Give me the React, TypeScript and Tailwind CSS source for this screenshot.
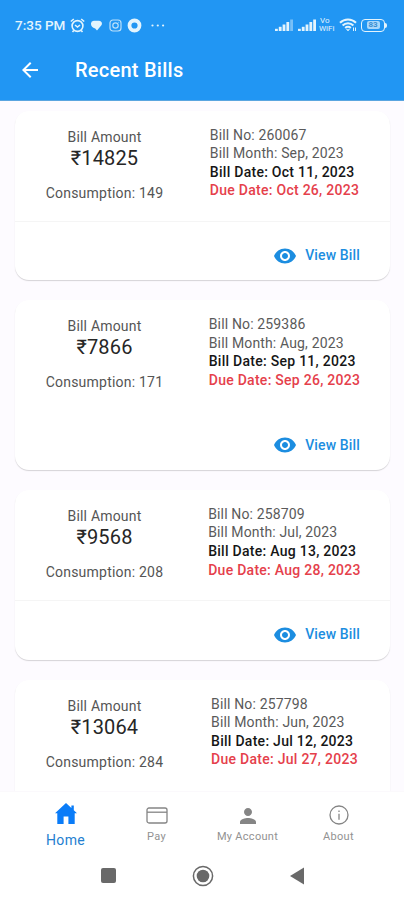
import type { ReactNode } from 'react';
import { MdArrowBack, MdPerson, MdVisibility } from 'react-icons/md';

type Bill = {
  no: string;
  amount: string;
  consumption: number;
  month: string;
  billDate: string;
  dueDate: string;
  divider: boolean;
  viewable: boolean;
};

const bills: Bill[] = [
  { no: '260067', amount: '14825', consumption: 149, month: 'Sep, 2023', billDate: 'Oct 11, 2023', dueDate: 'Oct 26, 2023', divider: true, viewable: true },
  { no: '259386', amount: '7866', consumption: 171, month: 'Aug, 2023', billDate: 'Sep 11, 2023', dueDate: 'Sep 26, 2023', divider: false, viewable: true },
  { no: '258709', amount: '9568', consumption: 208, month: 'Jul, 2023', billDate: 'Aug 13, 2023', dueDate: 'Aug 28, 2023', divider: true, viewable: true },
  { no: '257798', amount: '13064', consumption: 284, month: 'Jun, 2023', billDate: 'Jul 12, 2023', dueDate: 'Jul 27, 2023', divider: false, viewable: false },
];

function Signal({ weak = false }: { weak?: boolean }) {
  return (
    <svg width="18" height="12" viewBox="0 0 18 12" fill="currentColor">
      <rect x="0" y="9.8" width="2.8" height="2.2" />
      <rect x="3.8" y="7.8" width="2.8" height="4.2" />
      <rect x="7.6" y="5.5" width="2.8" height="6.5" />
      <rect x="11.4" y="3" width="2.8" height="9" />
      <rect x="15.2" y="0.5" width="2.8" height="11.5" opacity={weak ? 0.45 : 1} />
    </svg>
  );
}

function StatusBar() {
  return (
    <div className="flex h-[50px] items-center pl-[15px] pr-[17px] text-[#e3f4fd]">
      <span className="w-[54px] whitespace-nowrap text-[13.5px] font-medium">7:35 PM</span>
      {/* alarm */}
      <svg className="ml-[1px] shrink-0" width="15" height="15" viewBox="0 0 15 15" fill="none" stroke="currentColor" strokeWidth="1.6">
        <circle cx="7.5" cy="8" r="5.4" />
        <path d="M.8 3.5 3.8 1M14.2 3.5 11.2 1M3.8 12.5l-1.3 1.5M11.2 12.5l1.3 1.5M5 7l2.5 2L10 7" />
      </svg>
      {/* chat */}
      <svg className="ml-[6px] shrink-0" width="11" height="11" viewBox="0 0 11 11" fill="currentColor">
        <path d="M2.8.8h5.4a2.8 2.8 0 0 1 2.2 4.4L6 10.6 4.2 8.4C1.5 7.6 0 6.2 0 4A3 3 0 0 1 2.8.8Z" />
      </svg>
      {/* instagram */}
      <svg className="ml-[7px] shrink-0 opacity-80" width="13" height="13" viewBox="0 0 13 13" fill="none" stroke="currentColor" strokeWidth="1.2">
        <rect x="1" y="1" width="11" height="11" rx="3" />
        <circle cx="6.5" cy="6.5" r="2.7" />
        <path d="M9.5 3.4h.6" />
      </svg>
      <svg className="ml-[5px] shrink-0" width="15" height="15" viewBox="0 0 15 15" fill="none" stroke="currentColor" strokeWidth="3.8">
        <circle cx="7.5" cy="7.5" r="5" />
      </svg>
      <svg className="ml-[9px] shrink-0" width="14" height="3" viewBox="0 0 14 3" fill="currentColor">
        <circle cx="1.5" cy="1.5" r="1.1" />
        <circle cx="6.8" cy="1.5" r="1.1" />
        <circle cx="12.1" cy="1.5" r="1.1" />
      </svg>
      <div className="ml-auto flex items-center">
        <Signal weak />
        <span className="w-[5px]" />
        <Signal />
        <div className="ml-[3px] flex w-[17px] flex-col text-[8px] leading-[8px]">
          <span className="pl-[1px]">Vo</span>
          <span className="whitespace-nowrap">WiFi</span>
        </div>
        <svg className="ml-[3px]" width="18" height="14" viewBox="0 0 18 14" fill="none" stroke="currentColor" strokeWidth="2">
          <path d="M1 4.7a11.3 11.3 0 0 1 16 0M3.6 7.5a7.6 7.6 0 0 1 10.8 0M6.2 10a4 4 0 0 1 5.6 0" />
          <path d="m9 13 1.6-1.6H7.4Z" fill="currentColor" strokeWidth=".5" />
          <path d="M14.5 9.5v3.5M16.5 9.5v3.5" strokeWidth="1" />
        </svg>
        <span className="ml-[4px] flex h-[13px] w-[24px] items-center justify-center rounded-[4px] border-[1.5px] border-current">
          <span className="flex h-[8px] w-[13px] items-center justify-center rounded-[2px] bg-[#a9d8fb] text-[8px] font-bold leading-[8px] text-[#3a8fd0]">83</span>
        </span>
        <span className="h-[5px] w-[2px] rounded-r bg-current" />
      </div>
    </div>
  );
}

function BillCard({ bill }: { bill: Bill }) {
  return (
    <div className="flex h-[169.7px] shrink-0 flex-col rounded-[14px] bg-white shadow-[0_1px_1px_rgba(0,0,0,0.16)]">
      <div className={`grid h-[111px] grid-cols-2 border-b pr-[15px] text-[14px] ${bill.divider ? 'border-[#f5f5f5]' : 'border-transparent'}`}>
        <div className="flex flex-col items-center pt-[17px] text-[#555555]">
          <span className="h-[19px] leading-[19px] tracking-[0.2px]">Bill Amount</span>
          <span className="h-[24px] text-[20px] leading-[22px] tracking-[0.15px] text-[#262626]">₹{bill.amount}</span>
          <span className="mt-[13px] leading-[19px] tracking-[0.22px]">Consumption: {bill.consumption}</span>
        </div>
        <div className="flex justify-center pt-[15px] leading-[18.6px] tracking-[0.27px] text-[#5a5a5a]">
          <div className="whitespace-nowrap">
            <div className="tracking-[0.15px]">Bill No: {bill.no}</div>
            <div className="tracking-[0.15px]">Bill Month: {bill.month}</div>
            <div className="font-medium text-[#161616]">Bill Date: {bill.billDate}</div>
            <div className="font-medium text-[#e5404b]">Due Date: {bill.dueDate}</div>
          </div>
        </div>
      </div>
      {bill.viewable && (
        <div className="flex flex-1 items-center justify-end pr-[29.5px] pt-[9.5px] text-[#1c8de0]">
          <MdVisibility className="mr-[8px] size-6" />
          <span className="text-[14px] font-medium tracking-[0.15px]">View Bill</span>
        </div>
      )}
    </div>
  );
}

function Tab({ label, active = false, children }: { label: string; active?: boolean; children: ReactNode }) {
  return (
    <div className={`flex w-[91px] flex-col items-center ${active ? 'text-[#0a7cf8]' : 'text-[#858585]'}`}>
      <div className="flex h-[36px] items-end justify-center">{children}</div>
      <span className={active ? 'mt-[3px] text-[14px] leading-[18px] tracking-[0.3px] text-[#2480d0]' : 'mt-[2px] text-[11px] leading-[14px] tracking-[0.3px] text-[#929292]'}>{label}</span>
    </div>
  );
}

export default function App() {
  return (
    <div className="flex h-[900px] w-[404px] flex-col overflow-hidden bg-white font-[Roboto,sans-serif]">
      <header className="h-[101px] shrink-0 border-b border-[#5aa5e0] bg-[#2196f3]">
        <StatusBar />
        <div className="flex h-[40px] items-center pl-[18px] text-white">
          <MdArrowBack className="size-[24px]" />
          <h1 className="ml-[33px] text-[20px] font-medium tracking-[0.25px]">Recent Bills</h1>
        </div>
      </header>

      <main className="flex h-[690px] shrink-0 flex-col gap-[20px] overflow-hidden bg-[#fdfbff] px-[14.5px] pt-[9.5px]">
        {bills.map((bill) => (
          <BillCard key={bill.no} bill={bill} />
        ))}
      </main>

      <nav className="flex h-[60px] shrink-0 border-t border-[#fbf9fc] pl-[20px]">
        <Tab label="Home" active>
          <svg className="mb-[4px]" width="22" height="21" viewBox="0 0 22 21" fill="currentColor">
            <path d="M11 0 0 10.2h2.3V21h6.3v-7.6h4.8V21h6.3V10.2H22l-3.2-3V2.6h-2.4v2.4Z" />
          </svg>
        </Tab>
        <Tab label="Pay">
          <svg className="mb-[4px]" width="22" height="17" viewBox="0 0 22 17" fill="none" stroke="currentColor" strokeWidth="1.3">
            <rect x="1" y="1" width="20" height="15" rx="2" />
            <path d="M1 5.2h20" />
          </svg>
        </Tab>
        <Tab label="My Account">
          <MdPerson className="size-[24px]" />
        </Tab>
        <Tab label="About">
          <svg className="mb-[3px]" width="20" height="20" viewBox="0 0 20 20" fill="none" stroke="currentColor" strokeWidth="1.3">
            <circle cx="10" cy="10" r="9" />
            <path d="M10 8.7v6M10 5.4v1.6" />
          </svg>
        </Tab>
      </nav>

      <div className="flex h-[49px] shrink-0 items-center pl-[101px] text-[#696969]">
        <span className="size-[15px] rounded-[2px] bg-current" />
        <svg className="ml-[75.5px]" width="22" height="22" viewBox="0 0 22 22">
          <circle cx="11" cy="11" r="9.6" fill="none" stroke="currentColor" strokeWidth="1.5" />
          <circle cx="11" cy="11" r="6.3" fill="currentColor" />
        </svg>
        <svg className="ml-[76px]" width="14" height="18" viewBox="0 0 14 18" fill="currentColor">
          <path d="M0 9 14 .5v17Z" />
        </svg>
      </div>
    </div>
  );
}
